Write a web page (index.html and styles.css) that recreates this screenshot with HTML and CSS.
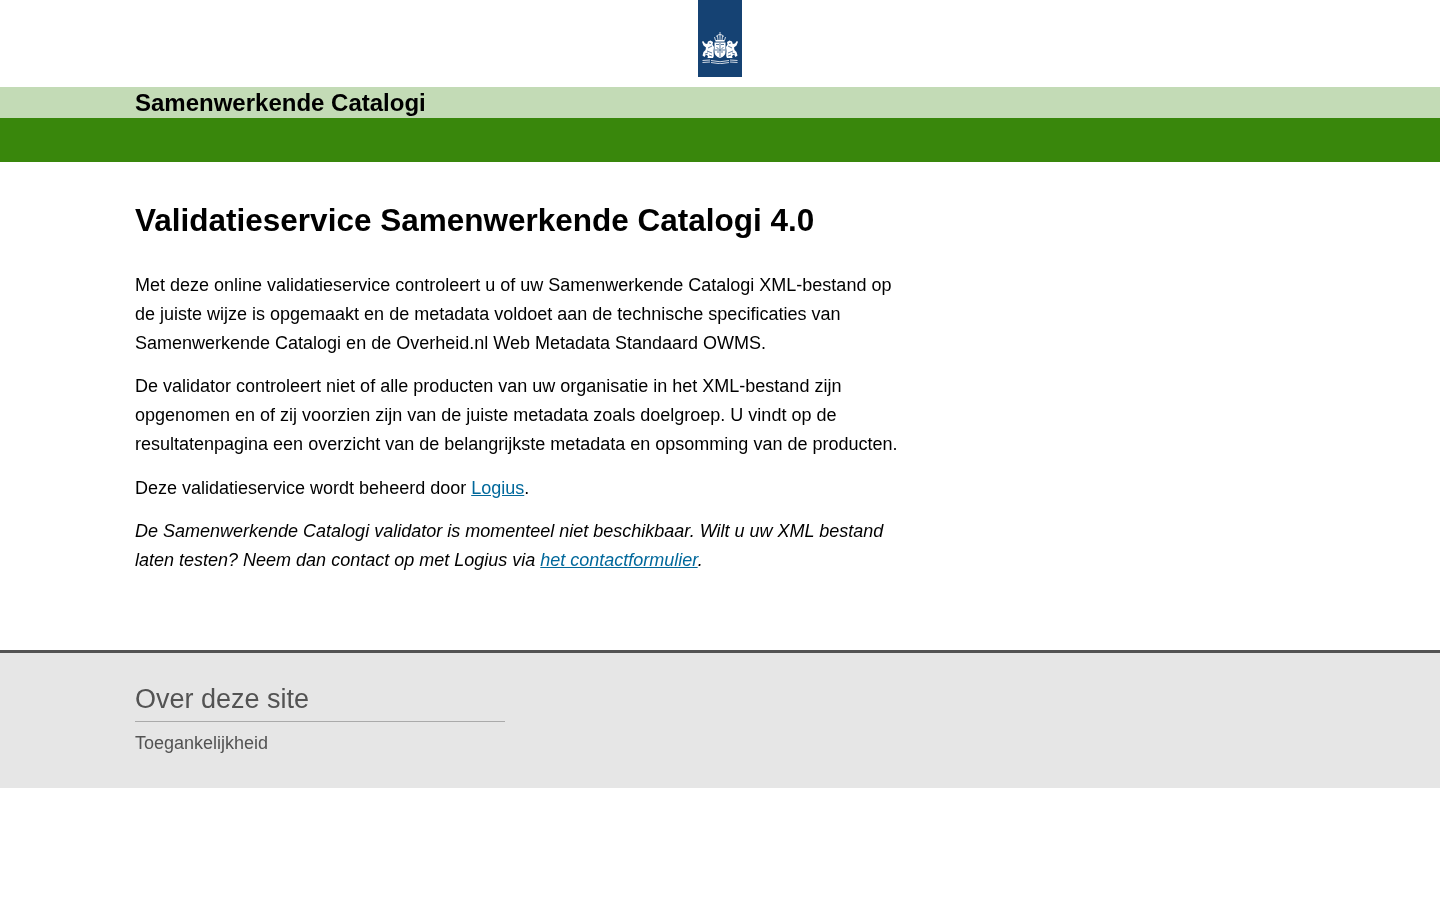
FILE: index.html
```html
<!DOCTYPE html>
<html lang="nl">
<head>
    <meta charset="UTF-8">
    <title>Validatieservice Samenwerkende Catalogi 4.0</title>
    <link rel="stylesheet" href="styles.css">
</head>
<body>
    <header class="site-header">
        <div class="logo-bar">
            <div class="logo">
                <svg class="crest" viewBox="0 0 38 32" width="38" height="32" aria-hidden="true">
                    <!-- crown -->
                    <path class="crest-line" d="M14.5 8.5 L13.5 5 M23.5 8.5 L24.5 5 M15 4.5 Q19 0.5 23 4.5 M19 0 V8.5 M16.5 4 L17 8.5 M21.5 4 L21 8.5"/>
                    <path class="crest-fill" d="M14.5 8 H23.5 V9.6 H14.5 Z"/>
                    <!-- shield -->
                    <path class="crest-fill" d="M13.5 10.5 H24.5 V20 Q24.5 24 19 26 Q13.5 24 13.5 20 Z"/>
                    <path class="crest-cut" d="M15 12.5 H18 M20 12.5 H23 M15.5 15 L17.5 17 M22.5 15 L20.5 17 M16 20 H18 M20 20 H22 M19 11 V25 M14 18 H24"/>
                    <!-- left lion -->
                    <path class="crest-fill" d="M12.8 24 L12.5 19 L13 15 L11.5 12.5 L12 10 L9.5 8.5 L7 9.5 L6.2 12 L4 11.5 L2.2 9 L1 9.8 L2.5 13.5 L5 15.5 L4.5 18 L2.5 20 L1.5 23.5 L3.5 25 L5 22.5 L7 24 L6.5 26 L12 26 Z"/>
                    <path class="crest-cut" d="M7 16 L11 14 M6 19 L11 21 M8 11 L10 11.5 M4 22 L7 21 M8 23 L11 24"/>
                    <!-- right lion -->
                    <path class="crest-fill" d="M25.2 24 L25.5 19 L25 15 L26.5 12.5 L26 10 L28.5 8.5 L31 9.5 L31.8 12 L34 11.5 L35.8 9 L37 9.8 L35.5 13.5 L33 15.5 L33.5 18 L35.5 20 L36.5 23.5 L34.5 25 L33 22.5 L31 24 L31.5 26 L26 26 Z"/>
                    <path class="crest-cut" d="M31 16 L27 14 M32 19 L27 21 M30 11 L28 11.5 M34 22 L31 21 M30 23 L27 24"/>
                    <!-- ribbon -->
                    <path class="crest-line" d="M1.5 28.5 L9 28 M1.5 30.5 L9 30 M29 28 L36.5 28.5 M29 30 L36.5 30.5 M10 28.5 Q19 31 28 28.5 M10 30.5 Q19 33 28 30.5"/>
                </svg>
            </div>
        </div>
        <div class="title-bar">
            <div class="wrap">
                <p class="site-name">Samenwerkende Catalogi</p>
            </div>
        </div>
        <div class="green-bar"></div>
    </header>

    <main class="wrap content">
        <h1>Validatieservice Samenwerkende Catalogi 4.0</h1>
        <p>Met deze online validatieservice controleert u of uw Samenwerkende Catalogi XML-bestand op de juiste wijze is opgemaakt en de metadata voldoet aan de technische specificaties van Samenwerkende Catalogi en de Overheid.nl Web Metadata Standaard OWMS.</p>
        <p>De validator controleert niet of alle producten van uw organisatie in het XML-bestand zijn opgenomen en of zij voorzien zijn van de juiste metadata zoals doelgroep. U vindt op de resultatenpagina een overzicht van de belangrijkste metadata en opsomming van de producten.</p>
        <p>Deze validatieservice wordt beheerd door <a href="#">Logius</a>.</p>
        <p><em>De Samenwerkende Catalogi validator is momenteel niet beschikbaar. Wilt u uw XML bestand laten testen? Neem dan contact op met Logius via <a href="#">het contactformulier</a>.</em></p>
    </main>

    <footer class="site-footer">
        <div class="wrap">
            <div class="footer-col">
                <h2>Over deze site</h2>
                <p class="footer-link">Toegankelijkheid</p>
            </div>
        </div>
    </footer>
</body>
</html>
```

FILE: styles.css
```css
body {
    font-family: "Liberation Sans", Arial, sans-serif;
    margin: 0;
    padding: 0;
    background: #fff;
    color: #000;
}

.wrap {
    margin-left: 135px;
    width: 770px;
    will-change: transform;
}

.logo-bar {
    height: 87px;
}

.logo {
    background: #154273;
    width: 44px;
    height: 77px;
    margin: 0 auto;
    display: flex;
    justify-content: center;
    padding-top: 32px;
    box-sizing: border-box;
}

.crest-fill {
    fill: #fff;
}

.crest-line {
    fill: none;
    stroke: #fff;
    stroke-width: 0.8;
}

.crest-cut {
    fill: none;
    stroke: #154273;
    stroke-width: 0.7;
}

.title-bar {
    background: #c3dbb6;
    height: 31px;
}

.site-name {
    font-size: 24px;
    font-weight: bold;
    line-height: 31px;
    margin: 0;
}

.green-bar {
    background: #39870c;
    height: 44px;
}

.content {
    padding-top: 38px;
    padding-bottom: 60px;
    font-size: 18px;
    line-height: 29px;
}

h1 {
    font-size: 31.5px;
    line-height: 40px;
    margin: 0 0 31px;
}

.content p {
    margin: 0 0 14.4px;
}

a {
    color: #01689b;
}

.site-footer {
    background: #e6e6e6;
    border-top: 3px solid #535353;
    height: 135px;
    color: #535353;
}

.footer-col {
    width: 370px;
}

h2 {
    font-size: 27px;
    font-weight: normal;
    line-height: 36px;
    margin: 0;
    padding-top: 28px;
    padding-bottom: 4px;
    border-bottom: 1px solid #aaa;
}

.footer-link {
    font-size: 18px;
    line-height: 29px;
    margin: 7px 0 0;
}
```
